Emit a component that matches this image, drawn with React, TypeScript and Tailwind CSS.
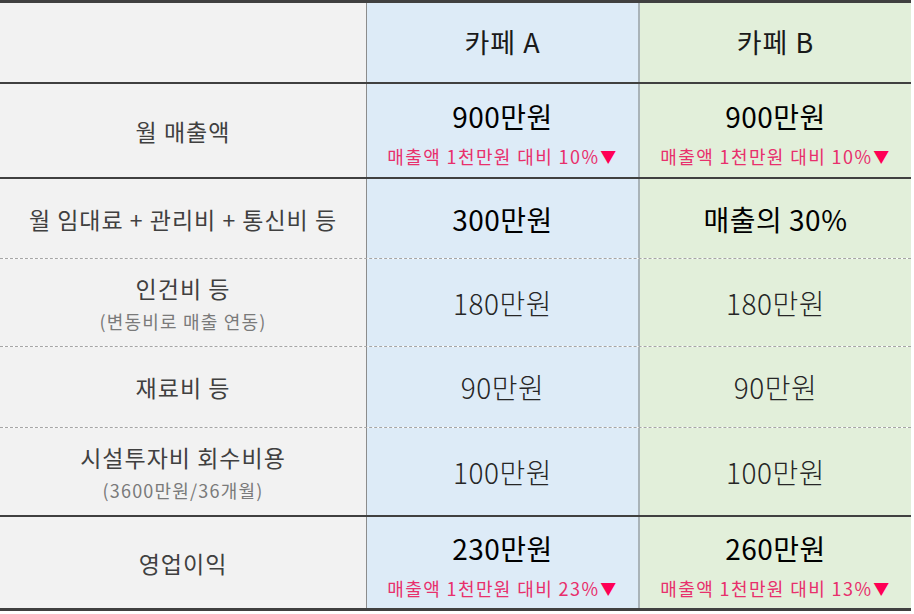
import React from 'react';

type Cell = { main: string; note?: string; strong?: boolean };
type Row = {
  label: string;
  sub?: string;
  a: Cell;
  b: Cell;
  h: string;
  line: string;
};

const rows: Row[] = [
  {
    label: '월 매출액',
    a: { main: '900만원', note: '매출액 1천만원 대비 10%', strong: true },
    b: { main: '900만원', note: '매출액 1천만원 대비 10%', strong: true },
    h: 'h-[95px]',
    line: 'border-b-2 border-[#404040]',
  },
  {
    label: '월 임대료 + 관리비 + 통신비 등',
    a: { main: '300만원', strong: true },
    b: { main: '매출의 30%', strong: true },
    h: 'h-[80px]',
    line: 'border-b border-dashed border-[#a6a6a6]',
  },
  {
    label: '인건비 등',
    sub: '(변동비로 매출 연동)',
    a: { main: '180만원' },
    b: { main: '180만원' },
    h: 'h-[88px]',
    line: 'border-b border-dashed border-[#a6a6a6]',
  },
  {
    label: '재료비 등',
    a: { main: '90만원' },
    b: { main: '90만원' },
    h: 'h-[81px]',
    line: 'border-b border-dashed border-[#a6a6a6]',
  },
  {
    label: '시설투자비 회수비용',
    sub: '(3600만원/36개월)',
    a: { main: '100만원' },
    b: { main: '100만원' },
    h: 'h-[89px]',
    line: 'border-b-2 border-[#404040]',
  },
  {
    label: '영업이익',
    a: { main: '230만원', note: '매출액 1천만원 대비 23%', strong: true },
    b: { main: '260만원', note: '매출액 1천만원 대비 13%', strong: true },
    h: 'h-[91px]',
    line: '',
  },
];

function Value({ cell }: { cell: Cell }) {
  return (
    <div className={`flex flex-col items-center justify-center ${cell.note ? 'pt-[5px]' : ''}`}>
      <p
        className={`text-[28px] leading-[36px] tracking-[0.5px] ${
          cell.strong ? 'text-black' : 'text-[#262626] font-light'
        }`}
      >
        {cell.main}
      </p>
      {cell.note && (
        <p className="text-[18px] leading-[24px] mt-[10px] tracking-[1.4px] text-[#e8306c] flex items-center">
          {cell.note}
          <span className="text-[#ff0055] text-[16px] ml-[1px]">▼</span>
        </p>
      )}
    </div>
  );
}

export default function App() {
  return (
    <div
      className="w-[914px] h-[614px] bg-white"
      style={{ fontFamily: '"Noto Sans CJK KR", "Noto Sans", sans-serif' }}
    >
      <div className="w-[911px] border-t-[3px] border-b-[3px] border-[#404040]">
        <div className="flex h-[81px] border-b-2 border-[#404040]">
          <div className="w-[367px] bg-[#f2f2f2] border-r border-[#8c8c8c]" />
          <div className="w-[273px] bg-[#ddebf7] border-r-2 border-[#a9b3b8] flex items-center justify-center text-[27px] tracking-[1px] text-[#1a1a1a]">
            카페 A
          </div>
          <div className="w-[271px] bg-[#e2efda] flex items-center justify-center text-[27px] tracking-[1px] text-[#1a1a1a]">
            카페 B
          </div>
        </div>
        {rows.map((r) => (
          <div key={r.label} className={`flex ${r.h} ${r.line}`}>
            <div className="w-[367px] bg-[#f2f2f2] border-r border-[#8c8c8c] flex flex-col items-center justify-center">
              <p className="text-[23px] leading-[32px] tracking-[1px] text-[#404040]">{r.label}</p>
              {r.sub && (
                <p className="text-[18px] leading-[26px] mt-[4px] tracking-[1.2px] text-[#7a7a7a]">{r.sub}</p>
              )}
            </div>
            <div className="w-[273px] bg-[#ddebf7] border-r-2 border-[#a9b3b8] flex items-center justify-center">
              <Value cell={r.a} />
            </div>
            <div className="w-[271px] bg-[#e2efda] flex items-center justify-center">
              <Value cell={r.b} />
            </div>
          </div>
        ))}
      </div>
    </div>
  );
}
